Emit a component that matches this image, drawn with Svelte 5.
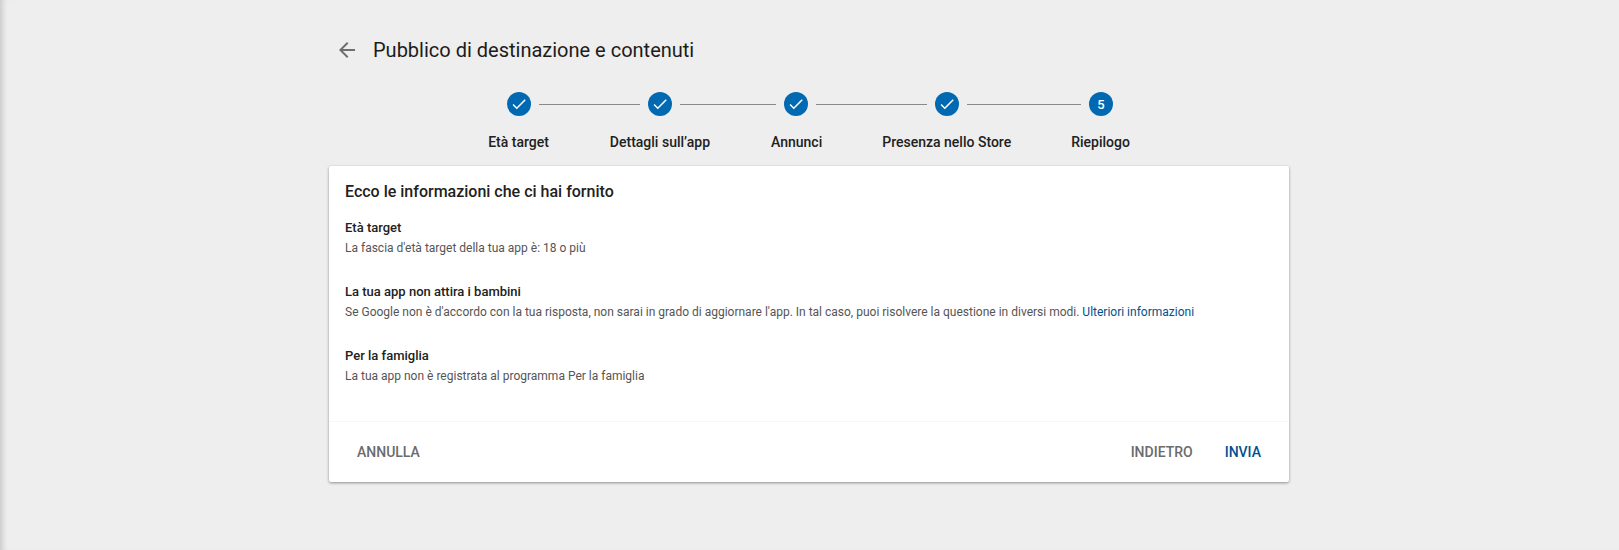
<script>
  const steps = [
    { label: 'Età target', done: true },
    { label: 'Dettagli sull’app', done: true },
    { label: 'Annunci', done: true },
    { label: 'Presenza nello Store', done: true },
    { label: 'Riepilogo', done: false, num: 5 }
  ];

  // widths of the connector lines between the step circles
  const lines = [101, 96, 111, 114];
</script>

<div class="page">
  <div class="content">
    <header class="top">
      <svg class="back" viewBox="0 0 24 24" width="24" height="24" aria-hidden="true">
        <path d="M20 11H7.83l5.59-5.59L12 4l-8 8 8 8 1.41-1.41L7.83 13H20v-2z" />
      </svg>
      <h1>Pubblico di destinazione e contenuti</h1>
    </header>

    <div class="stepper">
      <div class="circles">
        {#each steps as step, i}
          <span class="circle">
            {#if step.done}
              <svg viewBox="0 0 24 24" width="18" height="18" aria-hidden="true">
                <path d="M9 16.2 4.8 12l-1.4 1.4L9 19 21 7l-1.4-1.4z" />
              </svg>
            {:else}
              {step.num}
            {/if}
          </span>
          {#if i < lines.length}
            <span class="line" style="width:{lines[i]}px"></span>
          {/if}
        {/each}
      </div>
      <div class="labels">
        {#each steps as step}
          <span>{step.label}</span>
        {/each}
      </div>
    </div>

    <section class="card">
      <div class="body">
        <h2>Ecco le informazioni che ci hai fornito</h2>
        <div class="item">
          <h3>Età target</h3>
          <p>La fascia d'età target della tua app è: 18 o più</p>
        </div>
        <div class="item">
          <h3>La tua app non attira i bambini</h3>
          <p>Se Google non è d'accordo con la tua risposta, non sarai in grado di aggiornare l'app. In tal caso, puoi risolvere la questione in diversi modi. <a href="#top">Ulteriori informazioni</a></p>
        </div>
        <div class="item">
          <h3>Per la famiglia</h3>
          <p>La tua app non è registrata al programma Per la famiglia</p>
        </div>
      </div>
      <footer class="actions">
        <button>Annulla</button>
        <div class="right">
          <button>Indietro</button>
          <button class="primary">Invia</button>
        </div>
      </footer>
    </section>
  </div>
</div>

<style>
  :global(body) {
    margin: 0;
    background: #eeeeee;
  }

  .page {
    height: 550px;
    overflow: hidden;
    padding-right: 1px;
    font-family: Roboto, sans-serif;
    color: #212121;
    background: #eeeeee;
    box-shadow: inset 7px 0 6px -5px rgba(0, 0, 0, 0.18);
  }

  .content {
    width: 960px;
    margin: 0 auto;
  }

  .top {
    display: flex;
    align-items: center;
    height: 24px;
    padding-top: 38px;
    padding-left: 6px;
  }

  .back {
    fill: #6e6e6e;
    margin-right: 14px;
  }

  h1 {
    margin: 0;
    font-size: 20px;
    font-weight: 400;
    line-height: 24px;
    color: #1c1c1c;
  }

  .stepper {
    padding-top: 30px;
    padding-left: 2px;
  }

  .circles {
    display: flex;
    justify-content: center;
    align-items: center;
    gap: 8px;
  }

  .circle {
    width: 24px;
    height: 24px;
    border-radius: 50%;
    background: #0069b1;
    color: #fff;
    font-size: 13px;
    font-weight: 500;
    display: flex;
    align-items: center;
    justify-content: center;
  }

  .circle svg {
    fill: #fff;
  }

  .line {
    height: 1px;
    background: #8a8a8a;
  }

  .labels {
    display: flex;
    justify-content: center;
    gap: 60px;
    margin-top: 16px;
    padding-right: 2px;
    font-size: 14px;
    font-weight: 500;
    line-height: 20px;
  }

  .labels span:nth-child(-n + 2) {
    margin-right: 1px;
  }

  .card {
    margin-top: 14px;
    height: 316px;
    background: #fff;
    border-radius: 2px;
    box-shadow: 0 1px 3px rgba(0, 0, 0, 0.4);
    display: flex;
    flex-direction: column;
  }

  .body {
    flex: 1;
    padding: 16px 16px 0;
  }

  h2 {
    margin: 0 0 16px;
    font-size: 16px;
    font-weight: 500;
    line-height: 20px;
  }

  .item {
    height: 64px;
  }

  h3 {
    margin: 0;
    font-size: 13px;
    font-weight: 500;
    line-height: 20px;
  }

  p {
    margin: 0;
    font-size: 12px;
    line-height: 20px;
    color: #555555;
  }

  a {
    color: #01508f;
    text-decoration: none;
  }

  .actions {
    height: 60px;
    border-top: 1px solid #f7f7f7;
    display: flex;
    align-items: center;
    justify-content: space-between;
    padding: 0 12px;
  }

  .right {
    display: flex;
    gap: 4px;
    margin-right: 4px;
  }

  button {
    border: none;
    background: none;
    padding: 0 12px 0 16px;
    font-family: inherit;
    font-size: 14px;
    font-weight: 500;
    color: #6b6b6b;
    text-transform: uppercase;
  }

  .primary {
    color: #01508f;
  }
</style>
